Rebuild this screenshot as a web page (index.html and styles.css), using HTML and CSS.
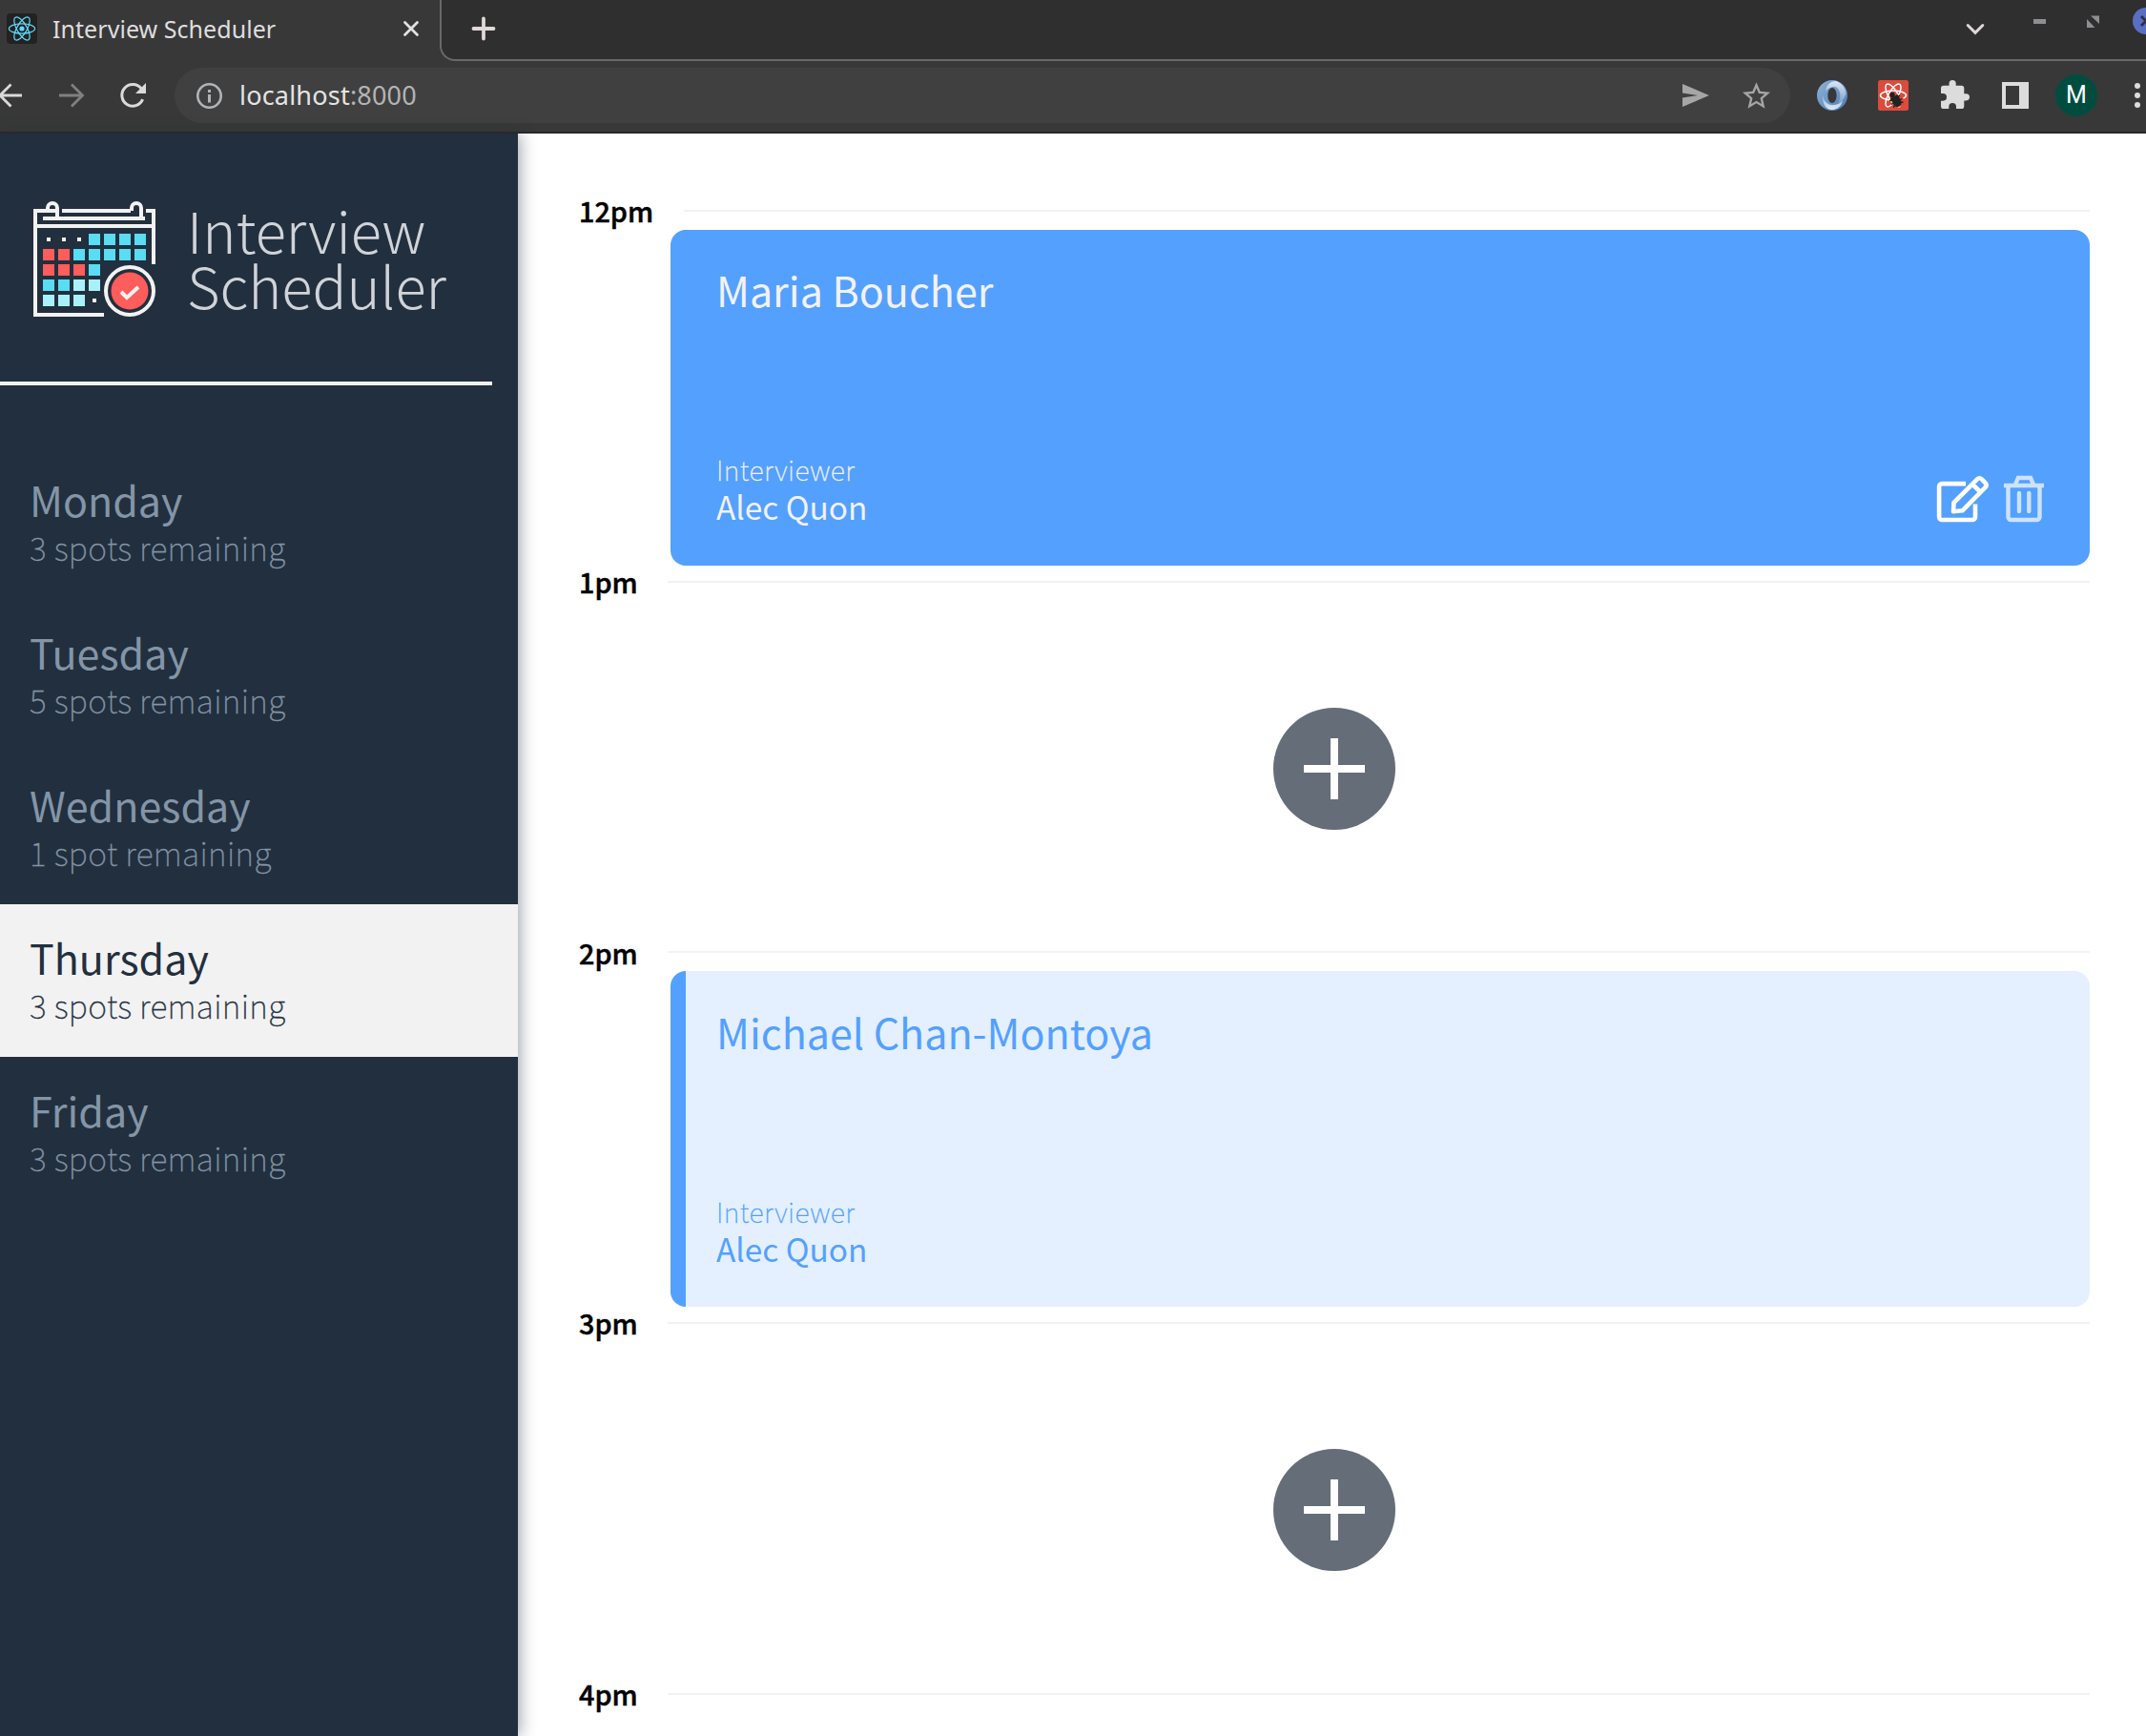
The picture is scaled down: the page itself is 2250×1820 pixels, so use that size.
FILE: index.html
```html
<!DOCTYPE html>
<html lang="en">
<head>
<meta charset="utf-8">
<title>Interview Scheduler</title>
<link rel="stylesheet" href="styles.css">
</head>
<body>
<header class="browser">
  <div class="tabstrip">
    <div class="tab">
      <svg class="favicon" viewBox="0 0 32 32"><rect width="32" height="32" rx="4" fill="#222"/><g fill="none" stroke="#61dafb" stroke-width="1.2"><ellipse cx="16" cy="16" rx="13.6" ry="5.2"/><ellipse cx="16" cy="16" rx="13.6" ry="5.2" transform="rotate(60 16 16)"/><ellipse cx="16" cy="16" rx="13.6" ry="5.2" transform="rotate(120 16 16)"/></g><circle cx="16" cy="16" r="2.6" fill="#61dafb"/></svg>
      <span class="tab-title">Interview Scheduler</span>
      <svg class="tab-close" viewBox="0 0 16 16"><path d="M1.5 1.5l13 13M14.5 1.5l-13 13" stroke="#e4e1e1" stroke-width="2.8" stroke-linecap="round"/></svg>
    </div>
    <div class="strip-rest">
      <svg class="new-tab" viewBox="0 0 24 24"><path d="M12 1.5v21M1.5 12h21" stroke="#e0d8d8" stroke-width="3.8" stroke-linecap="round"/></svg>
      <div class="window-controls">
        <svg class="ctl-chevron" viewBox="0 0 18 11"><path d="M1.2 1.5L9 9.3l7.8-7.8" fill="none" stroke="#e0d8d8" stroke-width="3" stroke-linecap="round"/></svg>
        <svg class="ctl-min" viewBox="0 0 13 5"><rect width="13" height="5" fill="#8e8e93"/></svg>
        <svg class="ctl-max" viewBox="0 0 13 13"><path d="M4 .5h9v8.500zM0 4v9h8.500z" fill="#8e8e93"/></svg>
        <svg class="ctl-close" viewBox="0 0 28 28"><circle cx="14" cy="14" r="14" fill="#5a6fc4"/><path d="M9 9l10 10M19 9L9 19" stroke="#2f2f45" stroke-width="3"/></svg>
      </div>
    </div>
  </div>
  <div class="toolbar">
    <svg class="nav-back" viewBox="0 0 26 26"><path d="M25 13H2M13.500 1.500L2 13l11.500 11.500" fill="none" stroke="#dadada" stroke-width="2.800"/></svg>
    <svg class="nav-forward" viewBox="0 0 26 26"><path d="M0 13h24M13 1.500L24.500 13 13 24.500" fill="none" stroke="#808080" stroke-width="2.800"/></svg>
    <svg class="nav-reload" viewBox="0 0 27 26"><path d="M23.600 17.200A11.300 11.300 0 1 1 22 5.800" fill="none" stroke="#dadada" stroke-width="3"/><path d="M27 0v11H16z" fill="#dadada"/></svg>
    <div class="omnibox">
      <svg class="site-info" viewBox="0 0 27 27"><circle cx="13.500" cy="13.500" r="12.200" fill="none" stroke="#b0b4ba" stroke-width="2.600"/><path d="M12 7h3v3h-3zM12 12h3v8.500h-3z" fill="#b0b4ba"/></svg>
      <span class="url">localhost<span class="port">:8000</span></span>
      <svg class="send" viewBox="0 0 28 24"><path d="M0 0l28 12L0 24v-9.500L16 12 0 9.500z" fill="#a6a6a6"/></svg>
      <svg class="star" viewBox="2 2 20 19"><path d="M22 9.240l-7.190-.62L12 2 9.190 8.630 2 9.240l5.460 4.730L5.820 21 12 17.270 18.180 21l-1.630-7.030L22 9.240zM12 15.400l-3.760 2.270 1-4.280-3.320-2.880 4.380-.38L12 6.100l1.710 4.040 4.380.38-3.320 2.880 1 4.280L12 15.400z" fill="#a6a6a6"/></svg>
    </div>
    <div class="extensions">
      <svg class="ext" viewBox="0 0 32 32">
        <defs>
          <linearGradient id="ring-base" x1="0" y1="0" x2="1" y2="1"><stop offset="0" stop-color="#8fb2d6"/><stop offset="1" stop-color="#4d7db4"/></linearGradient>
          <linearGradient id="ring-light" x1="0" y1="0" x2="0" y2="1"><stop offset="0" stop-color="#dbe8f4"/><stop offset="1" stop-color="#7ba1ca"/></linearGradient>
          <linearGradient id="ring-front" x1="0" y1="0" x2="0" y2="1"><stop offset="0" stop-color="#86a9cf"/><stop offset="1" stop-color="#e3edf7"/></linearGradient>
        </defs>
        <path fill-rule="evenodd" d="M16 0a16 16 0 0 1 0 32 16 16 0 0 1 0-32zM16 8c-3 0-4.600 4-4.600 8s1.600 8 4.600 8 4.600-4 4.600-8-1.600-8-4.600-8z" fill="url(#ring-base)"/>
        <path d="M9 12C10 5 14 1 20 1c6 2 10 7 10.500 13-1.500 5-4 9-8 10 2-4 2.500-9 1-12.500C21.500 7 18 6 15 7.500 12 8 10 10 9 12z" fill="url(#ring-light)"/>
        <path d="M6 14c.500 7 4 11.500 10 12 5 0 9-2 11-5-1 6-5 9.500-11 10C9 31 5 24 6 14z" fill="url(#ring-front)"/>
      </svg>
      <svg class="ext" viewBox="0 0 32 32"><rect width="32" height="32" rx="2.500" fill="#dc4b3b"/><g fill="none" stroke="#fff" stroke-width="1.500"><ellipse cx="16" cy="16" rx="13.500" ry="5"/><ellipse cx="16" cy="16" rx="13.500" ry="5" transform="rotate(60 16 16)"/><ellipse cx="16" cy="16" rx="13.500" ry="5" transform="rotate(120 16 16)"/></g><path d="M15 20l10-5 4 10-9 4z" fill="#dc4b3b"/><g transform="rotate(-28 18 20)" fill="#222" stroke="#222" stroke-width="1.400"><circle cx="17.500" cy="14.500" r="2"/><path d="M14.500 17.500h3.200v10h-1.500l-1.700-2zM18.800 17.500H22v8l-1.700 2h-1.500zM12 18.500l3 1M12 23h3M12.500 27l2.500-2M24.500 18.500l-3 1M24.500 23h-3M24 27l-2.500-2"/></g></svg>
      <svg class="puzzle" viewBox="2 1 21 21"><path d="M20.500 11H19V7a2 2 0 0 0-2-2h-4V3.500a2.500 2.500 0 0 0-5 0V5H4a2 2 0 0 0-2 2v3.800h1.500a2.700 2.700 0 0 1 0 5.400H2V20a2 2 0 0 0 2 2h3.800v-1.500a2.700 2.700 0 0 1 5.400 0V22H17a2 2 0 0 0 2-2v-4h1.500a2.500 2.500 0 0 0 0-5z" fill="#dcdcdc"/></svg>
      <svg class="panel" viewBox="0 0 28 28"><path d="M0 0h28v28H0zM4 4v20h14V4z" fill="#dcdcdc" fill-rule="evenodd"/></svg>
      <div class="avatar">M</div>
      <svg class="dots" viewBox="0 0 6 26"><g fill="#dcdcdc"><circle cx="3" cy="3" r="3"/><circle cx="3" cy="13" r="3"/><circle cx="3" cy="23" r="3"/></g></svg>
    </div>
  </div>
</header>
<main class="layout">
  <section class="sidebar">
    <div class="brand">
      <svg class="brand-icon" viewBox="0 0 128 122">
        <g fill="none" stroke="#f2f2f2" stroke-width="4">
          <path d="M23 10H2v109h72M30 10h72M118 10h8v56M2 26h124M10 18h107"/>
          <path d="M15 10V7a5 5 0 0 1 10 0v11M103 10V7a5 5 0 0 1 10 0v11"/>
        </g>
        <g fill="#f2f2f2"><path d="M14 38h4v4h-4zM30 38h4v4h-4zM46 38h4v4h-4zM62 102h4v4h-4z"/></g>
        <path fill="#5adcf2" d="M58 34h12v12H58zM74 34h12v12H74zM90 34h12v12H90zM106 34h12v12h-12zM42 50h12v12H42zM58 50h12v12H58zM74 50h12v12H74zM90 50h12v12H90zM106 50h12v12h-12zM58 66h12v12H58zM10 82h12v12H10zM26 82h12v12H26z"/>
        <path fill="#ff5c5c" d="M10 50h12v12H10zM26 50h12v12H26zM10 66h12v12H10zM26 66h12v12H26zM42 66h12v12H42z"/>
        <path fill="#a9f1fa" d="M42 82h12v12H42zM58 82h12v12H58zM10 98h12v12H10zM26 98h12v12H26zM42 98h12v12H42z"/>
        <circle cx="101" cy="94" r="25" fill="none" stroke="#f2f2f2" stroke-width="4"/>
        <circle cx="101" cy="94" r="19.500" fill="#ff5c5c"/>
        <path d="M92 95l6 6 12-11" fill="none" stroke="#f2f2f2" stroke-width="4"/>
      </svg>
      <div class="brand-name"><span>Interview</span><span>Scheduler</span></div>
    </div>
    <hr class="rule">
    <ul class="days">
      <li class="day"><h2 class="day-name">Monday</h2><p class="day-spots">3 spots remaining</p></li>
      <li class="day"><h2 class="day-name">Tuesday</h2><p class="day-spots">5 spots remaining</p></li>
      <li class="day"><h2 class="day-name">Wednesday</h2><p class="day-spots">1 spot remaining</p></li>
      <li class="day selected"><h2 class="day-name">Thursday</h2><p class="day-spots">3 spots remaining</p></li>
      <li class="day"><h2 class="day-name">Friday</h2><p class="day-spots">3 spots remaining</p></li>
    </ul>
  </section>
  <section class="schedule">
    <article class="slot">
      <header class="slot-time"><h4 class="hour two-digit">12pm</h4><hr class="line"></header>
      <div class="card active">
        <h2 class="student">Maria Boucher</h2>
        <div class="card-foot">
          <div><h4 class="label">Interviewer</h4><h3 class="interviewer">Alec Quon</h3></div>
          <div class="actions">
            <svg class="edit" viewBox="0 0 54 48"><g fill="none" stroke="#fff" stroke-width="4.600"><path d="M30 8.100H5.100a3 3 0 0 0-3 3V43a3 3 0 0 0 3 3H37a3 3 0 0 0 3-3V29.500"/><path d="M17.500 28L42.300 3.200a3 3 0 0 1 4.200 0l4.300 4.300a3 3 0 0 1 0 4.200L26.500 36.300l-9.500 1zM37 8.500l8.500 8.500" stroke-linejoin="round"/></g></svg>
            <svg class="trash" viewBox="0 0 42 48"><g fill="none" stroke="#fff" stroke-width="4.400"><path d="M0 10h42M12 9l3-7h13l3 7M4.500 10v33a3 3 0 0 0 3 3h27a3 3 0 0 0 3-3V10"/><path d="M16 18v19M26.300 18v19" stroke-linecap="round"/></g></svg>
          </div>
        </div>
      </div>
    </article>
    <article class="slot">
      <header class="slot-time"><h4 class="hour">1pm</h4><hr class="line"></header>
      <div class="empty"><svg class="add" viewBox="0 0 128 128"><circle cx="64" cy="64" r="64" fill="#656d79"/><path d="M64 32v64M32 64h64" stroke="#fff" stroke-width="8"/></svg></div>
    </article>
    <article class="slot">
      <header class="slot-time"><h4 class="hour">2pm</h4><hr class="line"></header>
      <div class="card">
        <h2 class="student">Michael Chan-Montoya</h2>
        <div class="card-foot"><div><h4 class="label">Interviewer</h4><h3 class="interviewer">Alec Quon</h3></div></div>
      </div>
    </article>
    <article class="slot">
      <header class="slot-time"><h4 class="hour">3pm</h4><hr class="line"></header>
      <div class="empty"><svg class="add" viewBox="0 0 128 128"><circle cx="64" cy="64" r="64" fill="#656d79"/><path d="M64 32v64M32 64h64" stroke="#fff" stroke-width="8"/></svg></div>
    </article>
    <article class="slot">
      <header class="slot-time"><h4 class="hour">4pm</h4><hr class="line"></header>
    </article>
  </section>
</main>
</body>
</html>
```
FILE: styles.css
```css
* { box-sizing: border-box; margin: 0; padding: 0; }
body {
  width: 2250px; height: 1820px; overflow: hidden;
  display: flex; flex-direction: column;
  background: #fff;
  font-family: "Noto Sans CJK SC", "Noto Sans", sans-serif;
}
svg { display: block; flex: none; overflow: visible; }
h2, h3, h4 { font-weight: 400; }

.browser { flex: none; height: 140px; background: #383838; border-bottom: 2px solid #282828; font-family: "Noto Sans", sans-serif; }
.tabstrip { display: flex; height: 64px; background: #383838; }
.tab { width: 461px; display: flex; align-items: center; padding: 0 22px 4px 7px; }
.favicon { width: 32px; height: 32px; }
.tab-title { margin-left: 16px; flex: 1; font-size: 25px; line-height: 36px; letter-spacing: .05px; color: #dedede; white-space: nowrap; }
.tab-close { width: 16px; height: 16px; }
.strip-rest {
  flex: 1; display: flex; align-items: flex-start; justify-content: space-between;
  background: #2f2f2f; border-left: 2px solid #696969; border-bottom: 2px solid #696969;
  border-bottom-left-radius: 16px; padding-left: 32px; overflow: hidden;
}
.new-tab { width: 24px; height: 24px; margin-top: 18px; }
.window-controls { display: flex; align-items: flex-start; margin-right: -14px; }
.ctl-chevron { width: 18px; height: 11px; margin: 25px 52px 0 0; }
.ctl-min { width: 13px; height: 5px; margin: 20px 43px 0 0; }
.ctl-max { width: 13px; height: 13px; margin: 16px 35px 0 0; }
.ctl-close { width: 28px; height: 28px; margin-top: 8px; }

.toolbar { height: 74px; display: flex; align-items: center; padding-bottom: 2px; }
.nav-back { width: 26px; height: 26px; margin-left: -2px; }
.nav-forward { width: 26px; height: 26px; margin-left: 38px; }
.nav-reload { width: 27px; height: 26px; margin-left: 38px; }
.omnibox { width: 1694px; height: 58px; margin-left: 30px; border-radius: 29px; background: #404040; display: flex; align-items: center; padding: 0 21px 0 23px; }
.site-info { width: 27px; height: 27px; }
.url { flex: 1; margin-left: 18px; font-size: 27px; line-height: 40px; letter-spacing: .2px; color: #e4e4e4; }
.port { color: #b4b4b4; }
.send { width: 28px; height: 24px; }
.star { width: 29px; height: 28px; margin-left: 35px; }
.extensions { display: flex; align-items: center; margin-left: 28px; }
.ext { width: 32px; height: 32px; margin-right: 32px; }
.puzzle { width: 30px; height: 30px; margin: 0 34px 2px 2px; }
.panel { width: 28px; height: 28px; }
.avatar { width: 44px; height: 44px; margin: 0 39px 0 28px; border-radius: 50%; background: #004d40; color: #fff; font: 25px/44px Roboto, sans-serif; text-align: center; }
.dots { width: 6px; height: 26px; }

.layout { flex: 1; display: flex; min-height: 0; }
.sidebar { width: 543px; background: #222f3e; box-shadow: 2px 0 16px rgba(34, 47, 62, .45); }
.brand { height: 260px; padding: 71px 0 0 35px; display: flex; align-items: flex-start; }
.brand-icon { width: 128px; height: 122px; }
.brand-name { display: flex; flex-direction: column; margin: 0 0 0 33px; font-weight: 300; font-size: 59.600px; line-height: 58px; color: #d0d3d8; }
.rule { width: 516px; height: 4px; border: 0; background: #f2f2f2; }
.days { list-style: none; margin-top: 64px; }
.day { height: 160px; padding: 31px 31px 0; color: #8395a7; }
.day.selected { background: #f2f2f2; color: #222f3e; }
.day-name { font-size: 43px; line-height: 48px; }
.day-spots { font-size: 33.700px; line-height: 54px; font-weight: 100; letter-spacing: .34px; -webkit-text-stroke: .35px currentColor; }

.schedule { flex: 1; padding: 64px 59px 0 64px; overflow: hidden; }
.slot { height: 388.800px; }
.slot-time { height: 36.800px; display: flex; align-items: flex-start; }
.hour { width: 61px; font-size: 28.800px; line-height: 34px; font-weight: 500; color: #000; -webkit-text-stroke: .5px #000; }
.hour.two-digit { width: 78px; }
.line { flex: 1; height: 2px; border: 0; background: #f2f2f2; margin: 15.900px 0 0 32px; }
.card { margin-left: 96px; height: 352px; border-radius: 16px; border-left: 16px solid #54a0ff; background: #e4f0ff; color: #54a0ff; padding: 37.300px 48px 39.700px 32px; display: flex; flex-direction: column; justify-content: space-between; }
.card.active { background: #54a0ff; color: #f2f2f2; }
.student { font-size: 43px; line-height: 50px; }
.card-foot { display: flex; justify-content: space-between; align-items: flex-end; }
.label { font-size: 28.500px; line-height: 38px; font-weight: 100; letter-spacing: .45px; -webkit-text-stroke: .3px currentColor; }
.interviewer { font-size: 33.400px; line-height: 40px; margin-bottom: 2px; }
.actions { display: flex; gap: 16px; padding-bottom: 6.300px; }
.edit { width: 54px; height: 48px; }
.trash { width: 42px; height: 48px; opacity: .7; }
.empty { height: 352px; display: flex; align-items: center; justify-content: center; }
.add { width: 128px; height: 128px; }
```
